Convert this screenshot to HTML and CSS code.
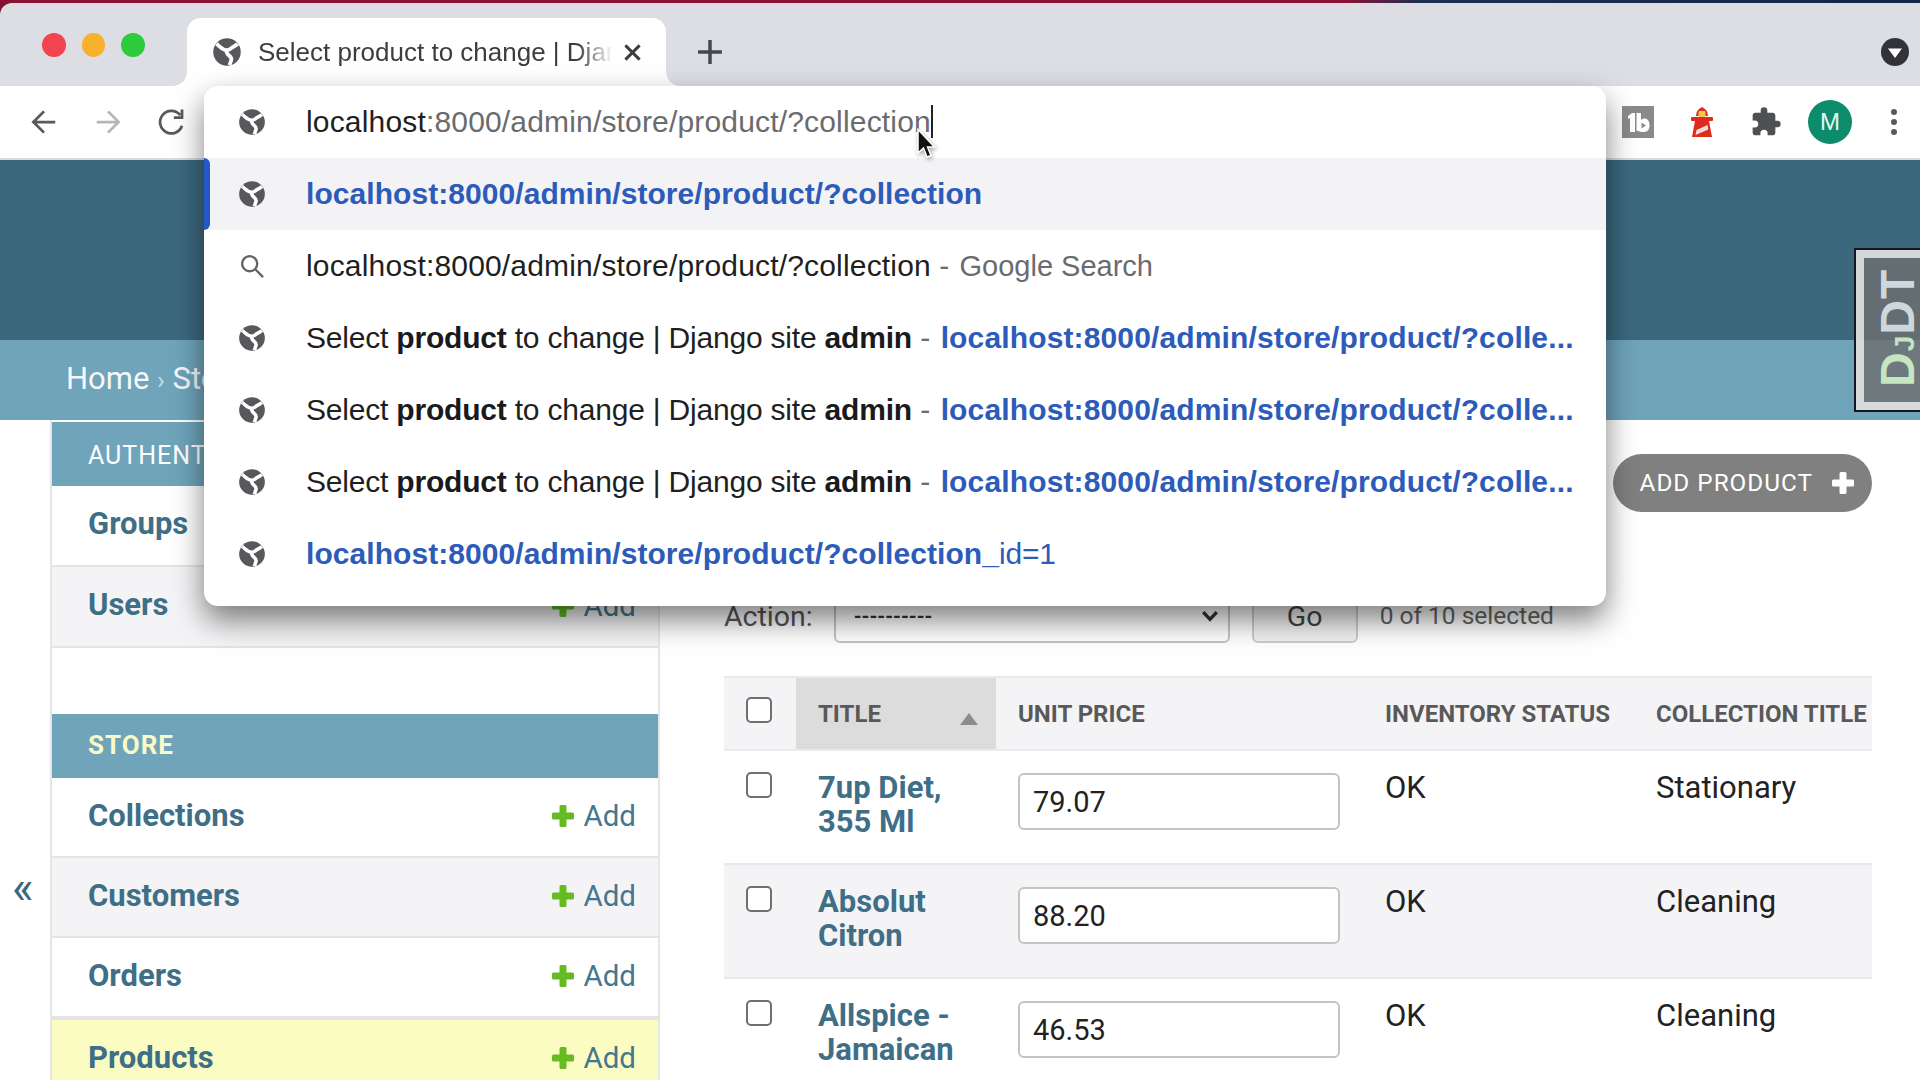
FILE: index.html
```html
<!DOCTYPE html>
<html lang="en">
<head>
    <meta charset="UTF-8">
    <title>Select product to change | Django site admin</title>
    <link rel="stylesheet" href="styles.css">
</head>
<body>
    <svg class="defs" width="0" height="0">
        <symbol id="globe" viewBox="0 0 24 24">
            <circle cx="12" cy="12" r="11" fill="#56585c"/>
            <path fill="none" stroke="#fff" stroke-width="3" d="M3.500 5.500C7 8 8 10.500 12 10.500C14 10.500 15 9 16 8.500C17.500 7.500 19 7 20.500 5.500"/>
            <path fill="none" stroke="#fff" stroke-width="3" d="M11.500 11C11.500 15 16 15 15.500 18C15 20 14.500 21 14 22.500"/>
        </symbol>
        <symbol id="plus" viewBox="0 0 24 24">
            <path d="M8.500 2.500a1.500 1.500 0 0 1 1.500-1.500h4a1.500 1.500 0 0 1 1.500 1.500v6h6a1.500 1.500 0 0 1 1.500 1.500v4a1.500 1.500 0 0 1-1.500 1.500h-6v6a1.500 1.500 0 0 1-1.500 1.500h-4a1.500 1.500 0 0 1-1.500-1.500v-6h-6a1.500 1.500 0 0 1-1.500-1.500v-4a1.500 1.500 0 0 1 1.500-1.500h6z"/>
        </symbol>
    </svg>

    <div class="window-edge"></div>

    <!-- browser chrome -->
    <div class="tabstrip">
        <div class="traffic">
            <span class="dot red"></span>
            <span class="dot yellow"></span>
            <span class="dot green"></span>
        </div>
        <div class="tab">
            <svg class="tab-globe"><use href="#globe"/></svg>
            <span class="tab-title">Select product to change | Django site admin</span>
            <svg class="tab-close" viewBox="0 0 16 16"><path d="M2 2l12 12M14 2L2 14"/></svg>
        </div>
        <svg class="new-tab" viewBox="0 0 24 24"><path d="M12 1v22M1 12h22"/></svg>
        <div class="tab-search">
            <svg viewBox="0 0 28 28"><circle cx="14" cy="14" r="14" fill="#323338"/><path d="M7 10.500h14L14 20z" fill="#fff"/></svg>
        </div>
    </div>
    <div class="toolbar">
        <svg class="nav-icon" viewBox="0 0 24 24"><path d="M21 12H4M12 3.500L3.500 12l8.500 8.500"/></svg>
        <svg class="nav-icon faded" viewBox="0 0 24 24"><path d="M3 12h17M12 3.500l8.500 8.500-8.500 8.500"/></svg>
        <svg class="nav-icon" viewBox="0 0 24 24"><path d="M20 15a9 9 0 1 1-1.500-8.500M20 2v6.500h-6.500"/></svg>
        <div class="toolbar-right">
            <svg class="ext-tb" viewBox="0 0 32 32">
                <rect width="32" height="32" fill="#8a8a8a"/>
                <path fill="#fff" d="M6 10l4-3h3v19H8V12l-2 1zM14.500 7H19v7c1-1 2-1.500 3.500-1.500 3 0 5 2.500 5 6.800S25.500 26 22 26c-2.500 0-5-.5-7.500-1.500z"/>
                <path fill="#8a8a8a" d="M19.500 16.500l4.500 3-4.500 3z"/>
            </svg>
            <svg class="ext-house" viewBox="0 0 22 30">
                <path fill="#dd2c1e" d="M5 9Q5 3 11 0Q17 3 17 9z"/>
                <rect x="7.500" y="4" width="7" height="6" rx="1" fill="#f9c74f"/>
                <rect y="10" width="22" height="4" rx="1" fill="#dd2c1e"/>
                <path fill="#dd2c1e" d="M4 14h14l3 16H1z"/>
                <path fill="#f3dcd8" d="M5.500 23l11-5 .8 4.500-12.800 5.500z"/>
            </svg>
            <svg class="ext-puzzle" viewBox="0 0 24 24"><path d="M20.500 11H19V7c0-1.100-.9-2-2-2h-4V3.500a2.500 2.500 0 0 0-5 0V5H4c-1.100 0-2 .9-2 2v3.800h1.500a2.700 2.700 0 0 1 0 5.400H2V20c0 1.100.9 2 2 2h3.800v-1.500a2.700 2.700 0 0 1 5.400 0V22H17c1.100 0 2-.9 2-2v-4h1.500a2.500 2.500 0 0 0 0-5z"/></svg>
            <div class="avatar">M</div>
            <div class="kebab"><span></span><span></span><span></span></div>
        </div>
    </div>

    <!-- django admin page -->
    <div class="page">
        <div class="site-header"></div>
        <div class="breadcrumbs">Home <span class="crumb-sep">›</span> Store</div>
        <div class="djdt"><span class="djdt-text"><b>D<small>J</small></b>DT</span></div>

        <div class="admin-main">
            <div class="collapse-col"><span class="collapse">«</span></div>
            <div class="sidebar">
                <div class="app-caption">AUTHENTICATION AND AUTHORIZATION</div>
                <div class="model-row auth-row">
                    <a class="model-name">Groups</a>
                    <a class="model-add"><svg><use href="#plus"/></svg>Add</a>
                </div>
                <div class="model-row auth-row alt">
                    <a class="model-name">Users</a>
                    <a class="model-add"><svg><use href="#plus"/></svg>Add</a>
                </div>
                <div class="app-caption store">STORE</div>
                <div class="model-row">
                    <a class="model-name">Collections</a>
                    <a class="model-add"><svg><use href="#plus"/></svg>Add</a>
                </div>
                <div class="model-row alt">
                    <a class="model-name">Customers</a>
                    <a class="model-add"><svg><use href="#plus"/></svg>Add</a>
                </div>
                <div class="model-row">
                    <a class="model-name">Orders</a>
                    <a class="model-add"><svg><use href="#plus"/></svg>Add</a>
                </div>
                <div class="model-row current">
                    <a class="model-name">Products</a>
                    <a class="model-add"><svg><use href="#plus"/></svg>Add</a>
                </div>
            </div>

            <div class="content">
                <div class="object-tools">
                    <a class="addlink">ADD PRODUCT<svg><use href="#plus"/></svg></a>
                </div>
                <div class="actions">
                    <label>Action:</label>
                    <div class="action-select"><span>----------</span><svg viewBox="0 0 16 12"><path d="M2 2.500l6 6.500 6-6.500"/></svg></div>
                    <div class="go-button">Go</div>
                    <span class="selected-count">0 of 10 selected</span>
                </div>
                <table class="results">
                    <thead>
                        <tr>
                            <th class="check-col"><span class="checkbox"></span></th>
                            <th class="title-col sorted">TITLE<span class="sort-arrow"></span></th>
                            <th class="price-col">UNIT PRICE</th>
                            <th class="status-col">INVENTORY STATUS</th>
                            <th>COLLECTION TITLE</th>
                        </tr>
                    </thead>
                    <tbody>
                        <tr>
                            <td><span class="checkbox"></span></td>
                            <td><a class="product-link">7up Diet, 355 Ml</a></td>
                            <td><div class="price-input">79.07</div></td>
                            <td>OK</td>
                            <td>Stationary</td>
                        </tr>
                        <tr class="alt">
                            <td><span class="checkbox"></span></td>
                            <td><a class="product-link">Absolut Citron</a></td>
                            <td><div class="price-input">88.20</div></td>
                            <td>OK</td>
                            <td>Cleaning</td>
                        </tr>
                        <tr>
                            <td><span class="checkbox"></span></td>
                            <td><a class="product-link">Allspice - Jamaican</a></td>
                            <td><div class="price-input">46.53</div></td>
                            <td>OK</td>
                            <td>Cleaning</td>
                        </tr>
                    </tbody>
                </table>
            </div>
        </div>
    </div>

    <!-- omnibox dropdown sits over the toolbar and page -->
    <div class="omnibox">
        <div class="omni-row omni-input">
            <svg class="omni-icon"><use href="#globe"/></svg>
            <span class="omni-text url">localhost<span class="grey">:8000/admin/store/product/?collection</span><span class="caret"></span></span>
        </div>
        <div class="omni-row selected">
            <svg class="omni-icon"><use href="#globe"/></svg>
            <span class="omni-text link full">localhost:8000/admin/store/product/?collection</span>
        </div>
        <div class="omni-row">
            <svg class="omni-icon search" viewBox="0 0 24 24"><circle cx="10" cy="10" r="6.500"/><path d="M15 15l6.500 6.500"/></svg>
            <span class="omni-text"><span class="url">localhost:8000/admin/store/product/?collection</span> <span class="dim">-</span> <span class="dim suffix">Google Search</span></span>
        </div>
        <div class="omni-row">
            <svg class="omni-icon"><use href="#globe"/></svg>
            <span class="omni-text"><span class="page-title">Select <b>product</b> to change | Django site <b>admin</b></span> <span class="dim">-</span> <span class="link after-dash">localhost:8000/admin/store/product/?colle...</span></span>
        </div>
        <div class="omni-row">
            <svg class="omni-icon"><use href="#globe"/></svg>
            <span class="omni-text"><span class="page-title">Select <b>product</b> to change | Django site <b>admin</b></span> <span class="dim">-</span> <span class="link after-dash">localhost:8000/admin/store/product/?colle...</span></span>
        </div>
        <div class="omni-row">
            <svg class="omni-icon"><use href="#globe"/></svg>
            <span class="omni-text"><span class="page-title">Select <b>product</b> to change | Django site <b>admin</b></span> <span class="dim">-</span> <span class="link after-dash">localhost:8000/admin/store/product/?colle...</span></span>
        </div>
        <div class="omni-row">
            <svg class="omni-icon"><use href="#globe"/></svg>
            <span class="omni-text"><span class="link full">localhost:8000/admin/store/product/?collection_</span><span class="link full thin">id=1</span></span>
        </div>
    </div>

    <svg class="cursor" viewBox="0 0 20 32"><path d="M2 1.500V25L7.500 20L11 29L15 27.500L11.500 19H18.500Z" fill="#111" stroke="#fff" stroke-width="1.500"/></svg>
</body>
</html>
```

FILE: styles.css
```css
html, body {
    height: 100%;
    margin: 0;
    overflow: hidden;
}

body {
    background-color: #7c1230;
    font-family: Roboto, sans-serif;
    color: #222;
    display: flex;
    flex-direction: column;
    position: relative;
}

.defs {
    position: absolute;
}

.window-edge {
    height: 3px;
    flex-shrink: 0;
    background: linear-gradient(to right, #8c1233 0%, #8c1233 70%, #1c2f52 74%, #14274a 100%);
}

/* tab strip */

.tabstrip {
    height: 83px;
    flex-shrink: 0;
    background-color: #dcdee3;
    border-radius: 12px 0 0 0;
    display: flex;
    align-items: flex-start;
    font-family: "Liberation Sans", sans-serif;
}

.traffic {
    display: flex;
    gap: 16px;
    padding: 30px 0 0 42px;
    width: 145px;
    box-sizing: border-box;
}

.dot {
    width: 24px;
    height: 24px;
    border-radius: 50%;
}

.dot.red { background-color: #f34350; }
.dot.yellow { background-color: #f8b12c; }
.dot.green { background-color: #2ecb3d; }

.tab {
    position: relative;
    margin: 15px 0 0 42px;
    width: 479px;
    height: 68px;
    padding: 0 24px 0 25px;
    box-sizing: border-box;
    background-color: #fff;
    border-radius: 14px 14px 0 0;
    display: flex;
    align-items: center;
    gap: 16px;
}

.tab::before,
.tab::after {
    content: "";
    position: absolute;
    bottom: 0;
    width: 14px;
    height: 14px;
}

.tab::before {
    left: -14px;
    background: radial-gradient(circle at 0 0, transparent 13.500px, #fff 14px);
}

.tab::after {
    right: -14px;
    background: radial-gradient(circle at 100% 0, transparent 13.500px, #fff 14px);
}

.tab-globe {
    width: 30px;
    height: 30px;
    flex-shrink: 0;
}

.tab-title {
    flex: 1;
    overflow: hidden;
    white-space: nowrap;
    font-size: 26px;
    color: #3c3d41;
    -webkit-mask-image: linear-gradient(to right, #000 90%, transparent);
    mask-image: linear-gradient(to right, #000 90%, transparent);
}

.tab-close {
    width: 19px;
    height: 19px;
    flex-shrink: 0;
    margin-left: -6px;
    fill: none;
    stroke: #3c3d41;
    stroke-width: 2.400;
}

.new-tab {
    width: 26px;
    height: 26px;
    margin: 36px 0 0 31px;
    fill: none;
    stroke: #46474b;
    stroke-width: 3.200;
}

.tab-search {
    margin: 35px 11px 0 auto;
}

.tab-search svg {
    width: 28px;
    height: 28px;
    display: block;
}

/* toolbar */

.toolbar {
    height: 72px;
    flex-shrink: 0;
    background-color: #fff;
    border-bottom: 2px solid #d9d9e0;
    display: flex;
    align-items: center;
    padding-left: 29px;
    gap: 34px;
}

.nav-icon {
    width: 30px;
    height: 30px;
    fill: none;
    stroke: #58595c;
    stroke-width: 2.200;
}

.nav-icon.faded {
    stroke: #b5b6b8;
}

.toolbar-right {
    margin-left: auto;
    display: flex;
    align-items: center;
}

.ext-tb {
    width: 32px;
    height: 32px;
}

.ext-house {
    width: 22px;
    height: 30px;
    margin-left: 37px;
}

.ext-puzzle {
    width: 32px;
    height: 32px;
    margin-left: 37px;
    fill: #4e5054;
}

.avatar {
    width: 44px;
    height: 44px;
    margin-left: 26px;
    border-radius: 50%;
    background-color: #0d8c6c;
    color: #e9f7f2;
    font: 400 24px "Liberation Sans", sans-serif;
    display: flex;
    align-items: center;
    justify-content: center;
}

.kebab {
    display: flex;
    flex-direction: column;
    gap: 4px;
    margin: 0 23px 0 39px;
}

.kebab span {
    width: 6px;
    height: 6px;
    border-radius: 50%;
    background-color: #58595c;
}

/* django admin */

.page {
    flex: 1;
    min-height: 0;
    position: relative;
    overflow: hidden;
    background-color: #fff;
    display: flex;
    flex-direction: column;
}

.site-header {
    height: 180px;
    flex-shrink: 0;
    background-color: #3c687e;
}

.breadcrumbs {
    height: 80px;
    flex-shrink: 0;
    background-color: #6fa4bb;
    color: #f4f8fa;
    font-size: 31px;
    line-height: 78px;
    padding-left: 66px;
}

.crumb-sep {
    color: #c6dbe4;
    font-size: 26px;
}

.djdt {
    position: absolute;
    top: 88px;
    right: -20px;
    width: 82px;
    height: 160px;
    border: 2px solid #101820;
    background-color: rgba(110, 110, 110, 0.8);
    box-shadow: inset 0 0 0 8px rgba(255, 255, 255, 0.72);
    overflow: hidden;
}

.djdt-text {
    position: absolute;
    left: 18px;
    top: 137px;
    transform-origin: 0 0;
    transform: rotate(-90deg);
    font: 700 48px/1 "Liberation Sans", sans-serif;
    letter-spacing: 1px;
    color: #cdd8de;
    white-space: nowrap;
}

.djdt-text b {
    color: #c6e6c2;
}

.djdt-text small {
    font-size: 28px;
}

.admin-main {
    flex: 1;
    min-height: 0;
    display: flex;
}

.collapse-col {
    width: 50px;
    flex-shrink: 0;
    position: relative;
}

.collapse {
    position: absolute;
    left: 12px;
    top: 444px;
    font-size: 46px;
    line-height: 1;
    color: #3c687e;
}

.sidebar {
    width: 606px;
    flex-shrink: 0;
    border-left: 2px solid #e6e6e6;
    border-right: 2px solid #e6e6e6;
    padding-top: 2px;
}

.app-caption {
    height: 64px;
    background-color: #6fa4bb;
    color: #fff;
    font-size: 25px;
    letter-spacing: 1px;
    line-height: 68px;
    padding-left: 36px;
    white-space: nowrap;
    overflow: hidden;
}

.app-caption.store {
    margin-top: 66px;
    line-height: 62px;
    font-size: 26px;
    color: #fafac8;
    font-weight: 700;
}

.model-row {
    height: 76px;
    border-bottom: 2px solid #e4e4e4;
    display: flex;
    align-items: center;
    justify-content: space-between;
    padding: 0 22px 2px 36px;
}

.model-row.auth-row {
    height: 77px;
}

.model-row.alt {
    background-color: #f4f4f6;
}

.model-row.current {
    background-color: #fbfcc2;
    border-top: 2px solid #e4e4e4;
}

.model-name {
    font-size: 31px;
    font-weight: 700;
    color: #3f6f87;
    margin-bottom: 2px;
}

.model-add {
    display: flex;
    align-items: center;
    gap: 8px;
    font-size: 29.500px;
    color: #44778f;
}

.model-add svg {
    width: 24px;
    height: 24px;
    fill: #66bb22;
}

.content {
    flex: 1;
    padding: 34px 48px 0 64px;
    min-width: 0;
    overflow: hidden;
}

.object-tools {
    display: flex;
    justify-content: flex-end;
    height: 58px;
}

.addlink {
    height: 58px;
    padding: 0 17px 2px 27px;
    box-sizing: border-box;
    border-radius: 29px;
    background-color: #808080;
    color: #fff;
    font-size: 24.300px;
    letter-spacing: 1px;
    display: flex;
    align-items: center;
    gap: 18px;
}

.addlink svg {
    width: 24px;
    height: 24px;
    margin-top: 2px;
    fill: #fff;
}

.actions {
    margin-top: 77px;
    height: 54px;
    display: flex;
    align-items: center;
    font-size: 28.500px;
    color: #555;
}

.action-select {
    width: 396px;
    height: 54px;
    box-sizing: border-box;
    margin-left: 21px;
    border: 2px solid #c4c4c4;
    border-radius: 6px;
    background-color: #fff;
    display: flex;
    align-items: center;
    justify-content: space-between;
    padding: 0 9px 0 18px;
    font-size: 20px;
    font-weight: 700;
    color: #333;
}

.action-select svg {
    width: 18px;
    height: 14px;
    fill: none;
    stroke: #333;
    stroke-width: 3;
}

.go-button {
    width: 106px;
    height: 54px;
    box-sizing: border-box;
    margin-left: 22px;
    border: 2px solid #ccc;
    border-radius: 6px;
    background-color: #f2f2f2;
    display: flex;
    align-items: center;
    justify-content: center;
    color: #444;
}

.selected-count {
    margin: -2px 0 0 22px;
    font-size: 24.500px;
    color: #666;
}

.results {
    width: 100%;
    border-collapse: collapse;
    table-layout: fixed;
    margin-top: 33px;
}

.results th {
    height: 73px;
    padding: 0 0 0 22px;
    text-align: left;
    background-color: #f4f4f6;
    border-top: 2px solid #eaeaea;
    border-bottom: 2px solid #eaeaea;
    font-size: 24px;
    font-weight: 700;
    color: #595959;
    white-space: nowrap;
    box-sizing: border-box;
}

.results th.check-col {
    width: 72px;
}

.results th.title-col {
    width: 200px;
    position: relative;
}

.results th.price-col {
    width: 367px;
}

.results th.status-col {
    width: 271px;
}

.results th.sorted {
    background-color: #dcdcdc;
}

.sort-arrow {
    position: absolute;
    right: 18px;
    bottom: 24px;
    border-left: 9px solid transparent;
    border-right: 9px solid transparent;
    border-bottom: 12px solid #8c8c8c;
}

.checkbox {
    display: block;
    width: 26px;
    height: 26px;
    box-sizing: border-box;
    border: 2px solid #6f6f6f;
    border-radius: 5px;
    background-color: #fff;
}

th .checkbox {
    margin-top: -8px;
}

td .checkbox {
    margin-top: 1px;
}

.results td {
    padding: 20px 16px 21px 22px;
    height: 114px;
    vertical-align: top;
    box-sizing: border-box;
    border-bottom: 2px solid #e8e8e8;
    font-size: 31px;
    line-height: 34px;
    color: #222;
}

.results tr.alt td {
    background-color: #f4f4f6;
}

.product-link {
    font-weight: 700;
    color: #3f6f87;
}

.price-input {
    width: 322px;
    height: 57px;
    margin-top: 2px;
    box-sizing: border-box;
    border: 2px solid #c4c4c4;
    border-radius: 6px;
    background-color: #fff;
    padding-left: 13px;
    display: flex;
    align-items: center;
    font-size: 29px;
    color: #222;
}

/* omnibox */

.omnibox {
    position: absolute;
    left: 204px;
    top: 86px;
    width: 1402px;
    background-color: #fff;
    border-radius: 14px;
    padding-bottom: 16px;
    box-shadow: 0 14px 30px rgba(0, 0, 0, 0.5);
    font-family: "Liberation Sans", sans-serif;
}

.omni-row {
    height: 72px;
    display: flex;
    align-items: center;
    padding-left: 34px;
    position: relative;
}

.omni-row.selected {
    background-color: #f3f3f5;
}

.omni-row.selected::before {
    content: "";
    position: absolute;
    left: 0;
    top: 0;
    bottom: 0;
    width: 6px;
    background-color: #2359c4;
    border-radius: 0 6px 6px 0;
}

.omni-icon {
    width: 28px;
    height: 32px;
    flex-shrink: 0;
}

.omni-icon.search {
    fill: none;
    stroke: #5f6266;
    stroke-width: 2;
}

.omni-text {
    margin-left: 40px;
    font-size: 30px;
    color: #1f1f22;
    white-space: nowrap;
}

.omni-text b {
    color: #1a1a1c;
}

.url {
    letter-spacing: 0.17px;
}

.page-title {
    letter-spacing: -0.2px;
}

.grey,
.dim {
    color: #6a6b6e;
}

.suffix {
    font-size: 29px;
    margin-left: 2px;
}

.link {
    color: #2d5bb9;
    font-weight: 700;
    letter-spacing: 0.14px;
}

.link.full {
    letter-spacing: 0.06px;
}

.link.after-dash {
    margin-left: 2px;
}

.link.thin {
    font-weight: 400;
    letter-spacing: -0.2px;
}

.caret {
    display: inline-block;
    width: 2px;
    height: 33px;
    background-color: #222;
    vertical-align: -6px;
}

.cursor {
    position: absolute;
    left: 916px;
    top: 128px;
    width: 20px;
    height: 32px;
    filter: drop-shadow(1px 2px 2px rgba(0, 0, 0, 0.35));
}
```
